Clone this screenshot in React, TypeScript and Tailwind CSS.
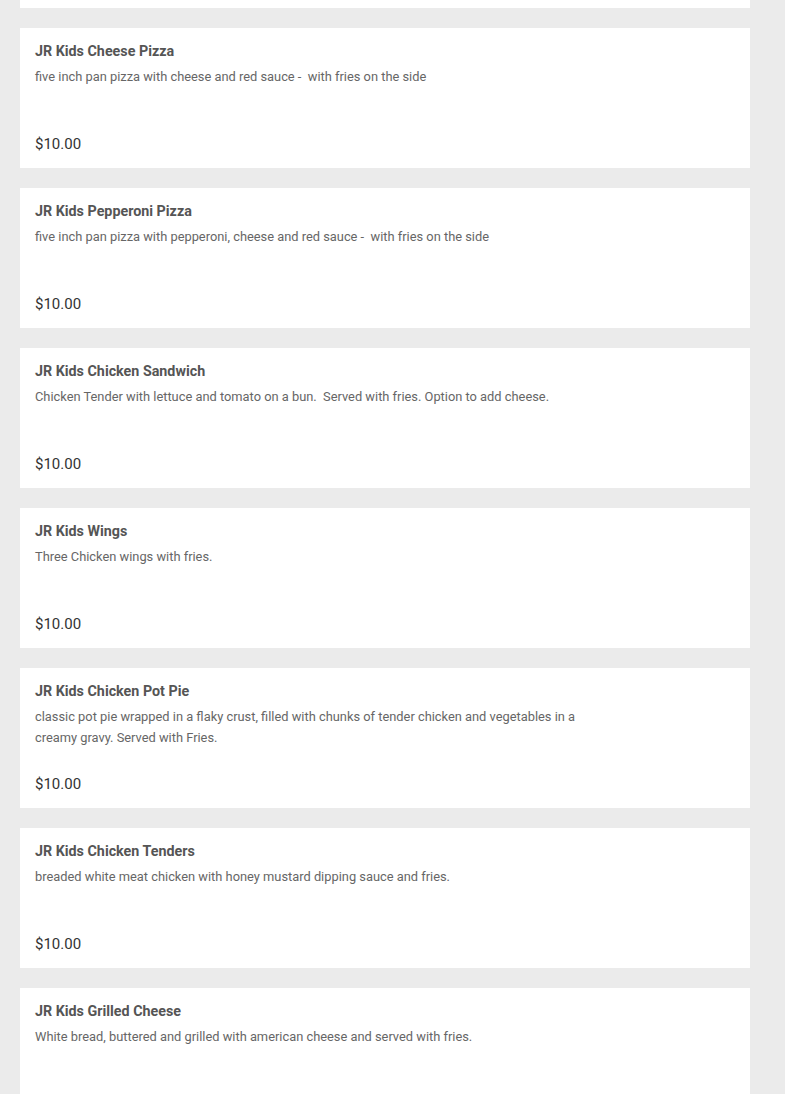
const items = [
  { name: "JR Kids Cheese Pizza", desc: "five inch pan pizza with cheese and red sauce -  with fries on the side" },
  { name: "JR Kids Pepperoni Pizza", desc: "five inch pan pizza with pepperoni, cheese and red sauce -  with fries on the side" },
  { name: "JR Kids Chicken Sandwich", desc: "Chicken Tender with lettuce and tomato on a bun.  Served with fries. Option to add cheese." },
  { name: "JR Kids Wings", desc: "Three Chicken wings with fries." },
  {
    name: "JR Kids Chicken Pot Pie",
    desc: "classic pot pie wrapped in a flaky crust, filled with chunks of tender chicken and vegetables in a creamy gravy. Served with Fries.",
  },
  { name: "JR Kids Chicken Tenders", desc: "breaded white meat chicken with honey mustard dipping sauce and fries." },
  { name: "JR Kids Grilled Cheese", desc: "White bread, buttered and grilled with american cheese and served with fries." },
];

export default function App() {
  return (
    <div className="h-[1094px] overflow-hidden bg-[#ebebeb] font-['Roboto',sans-serif]">
      <div className="flex w-[750px] flex-col gap-5 pl-5">
        {/* previous item, scrolled mostly out of view */}
        <div className="h-2 bg-white" />
        {items.map((item) => (
          <div key={item.name} className="flex h-[140px] flex-col bg-white px-[15px] pt-[13px] pb-[14px]">
            <p className="text-[14.3px] leading-5 font-bold text-[#555]">{item.name}</p>
            <p className="mt-[5px] max-w-[570px] whitespace-pre-wrap text-[12.85px] leading-[21px] text-[#666]">
              {item.desc}
            </p>
            <p className="mt-auto text-[15px] leading-5 text-[#333]">$10.00</p>
          </div>
        ))}
      </div>
    </div>
  );
}
